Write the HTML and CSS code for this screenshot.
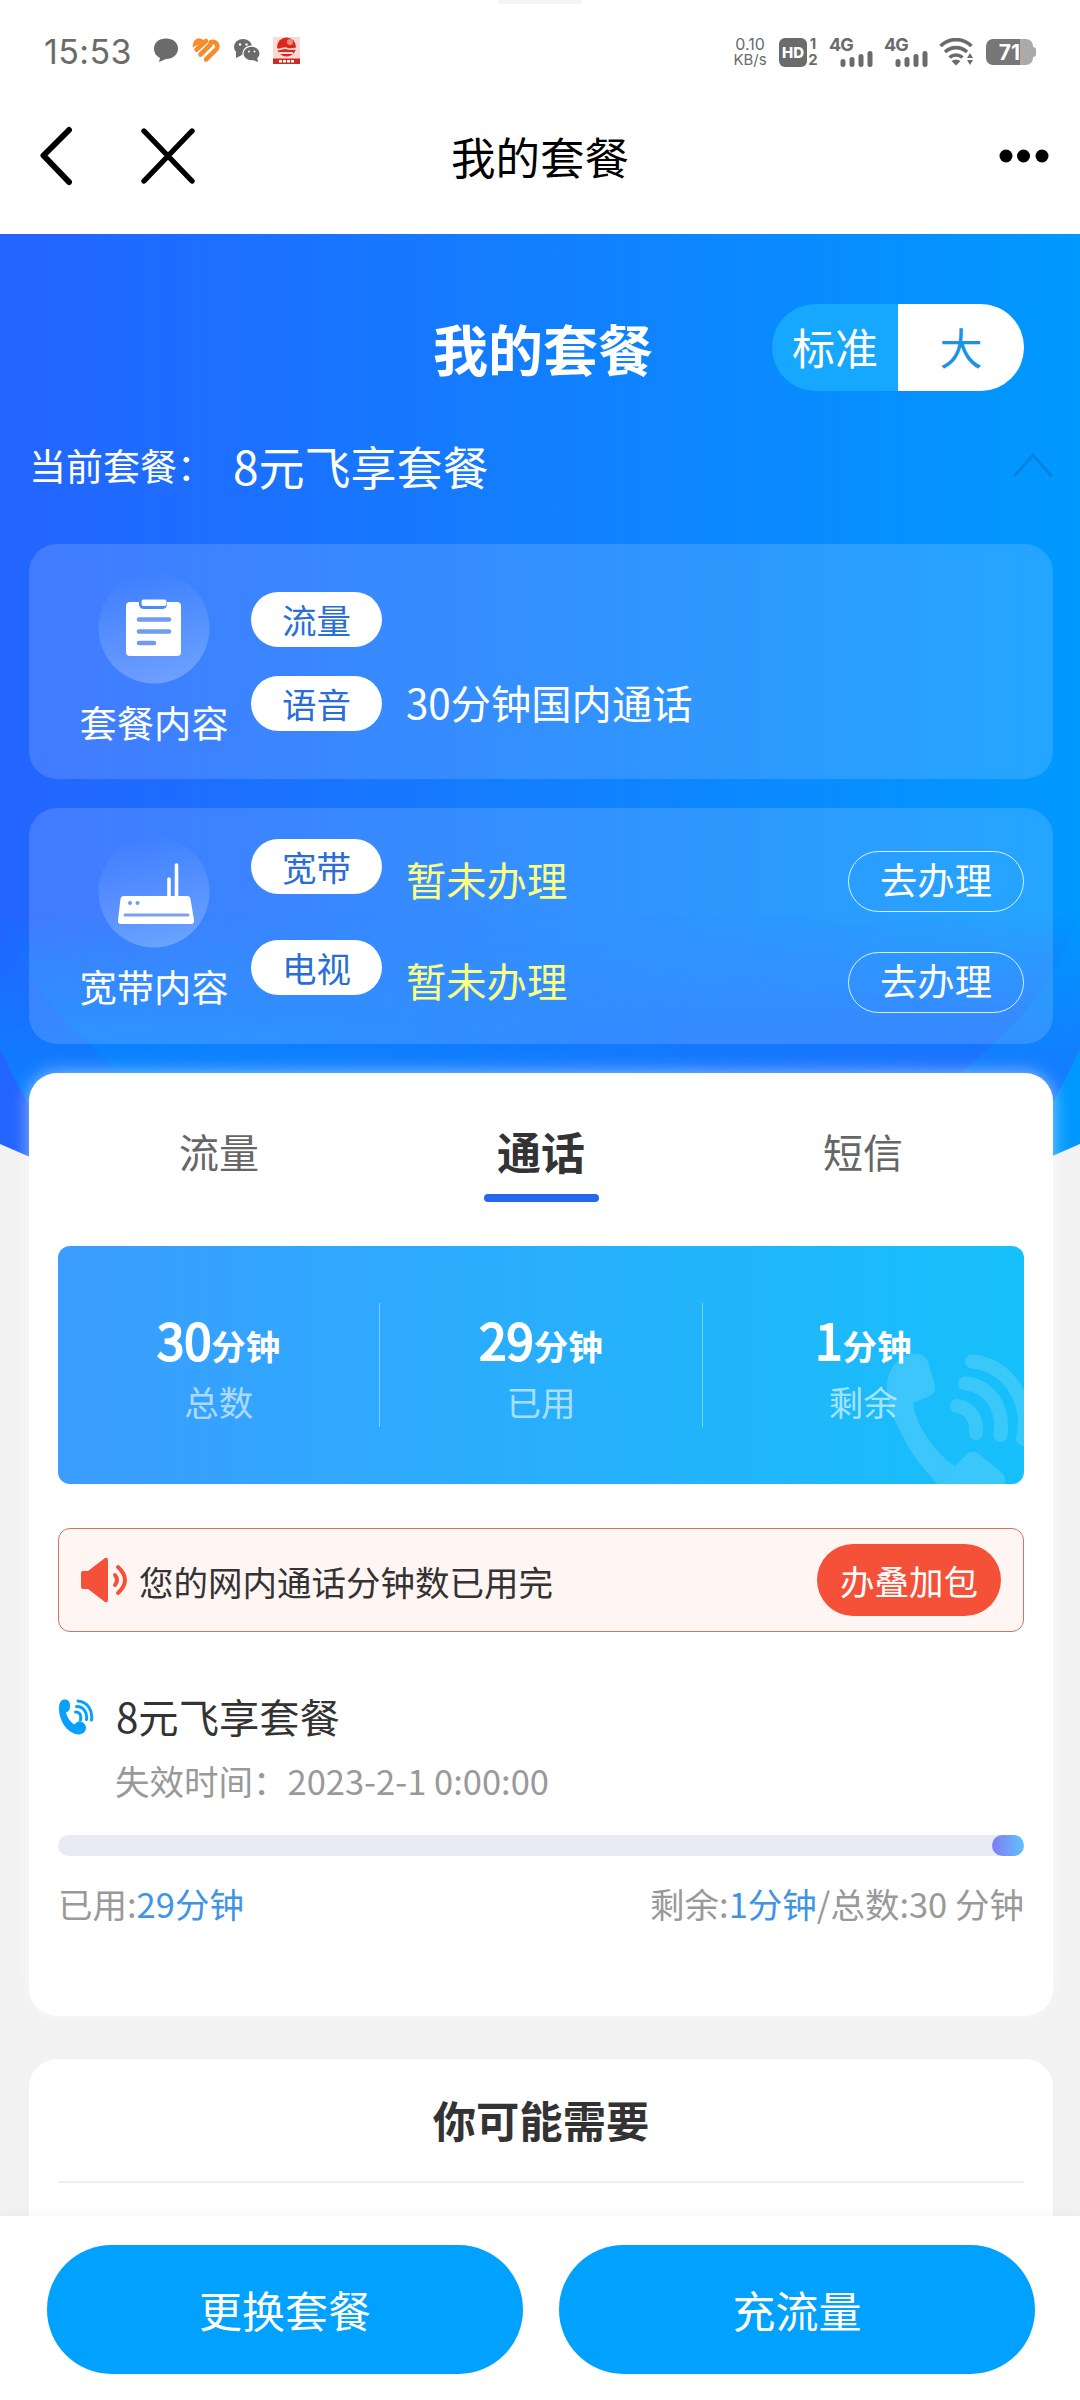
FILE: index.html
```html
<!DOCTYPE html>
<html lang="zh-CN">
<head>
<meta charset="utf-8">
<title>我的套餐</title>
<link rel="stylesheet" href="styles.css">
</head>
<body>
<div class="screen">
  <header class="top">
    <span class="island"></span>
    <div class="status">
      <span class="time">15:53</span>
      <svg class="st-left" width="150" height="30" viewBox="0 0 150 30">
        <path d="M14 2.500c7 0 12 4 12 10s-5 10.500-12 10.500l-7 3 1-4C4 20 2 17 2 12.500c0-6 5-10 12-10z" fill="#6b6b6b"/>
        <g fill="none" stroke="#f58d2c" stroke-width="4.600" stroke-linecap="round">
          <path d="M43.500 7.500a3.500 3.500 0 0 1 5-2.500z"/><path d="M44.500 13.500 54 5"/><path d="M48.500 18.500 58.500 8.500M54 23.500 63 14.500a4.500 4.500 0 0 0-4.500-8"/>
        </g>
        <ellipse cx="91" cy="11" rx="9" ry="8" fill="#6b6b6b"/><path d="M84 16v6l6-3z" fill="#6b6b6b"/>
        <ellipse cx="99.500" cy="17.500" rx="8.600" ry="7.400" fill="#6b6b6b" stroke="#fff" stroke-width="1.200"/><path d="M101 24l5 2-1-5z" fill="#6b6b6b"/>
        <g fill="#fff"><circle cx="88" cy="8.500" r="1.200"/><circle cx="94.500" cy="8.500" r="1.200"/><circle cx="97" cy="15.500" r="1"/><circle cx="102.500" cy="15.500" r="1"/></g>
        <path d="M121 1h27v27h-27z" fill="#fbd9d4"/><circle cx="134.500" cy="11" r="9.500" fill="#d8291c"/>
        <circle cx="138" cy="6" r="3" fill="#f08c78"/>
        <path d="M125 13.500c5 0 7-2.500 10-1s5 .5 9 0M127 17h14" stroke="#fbd9d4" stroke-width="1.800" fill="none"/>
        <path d="M121 22.500h27V28h-27z" fill="#cf2a22"/><path d="M127 25.300h16" stroke="#fff" stroke-width="2.500" stroke-dasharray="3 1"/>
      </svg>
      <span class="grow"></span>
      <span class="speed"><span>0.10</span><span>KB/s</span></span>
      <span class="hd">HD</span>
      <span class="sims"><span>1</span><span>2</span></span>
      <span class="net"><b>4G</b><svg width="33" height="16" viewBox="0 0 33 16"><path d="M3 13.500v-3M12 13.500v-5M21 13.500v-8M30 13.500v-11" stroke="#6b6b6b" stroke-width="5" stroke-linecap="round"/></svg></span>
      <span class="net"><b>4G</b><svg width="33" height="16" viewBox="0 0 33 16"><path d="M3 13.500v-3M12 13.500v-5M21 13.500v-8M30 13.500v-11" stroke="#6b6b6b" stroke-width="5" stroke-linecap="round"/></svg></span>
      <svg class="wifi" width="34" height="28" viewBox="0 0 34 28">
        <g fill="none" stroke="#6b6b6b" stroke-width="3.600"><path d="M1.500 8a22 22 0 0 1 31 0"/><path d="M6 14a16 16 0 0 1 22 0"/><path d="M10.500 19.500a9.500 9.500 0 0 1 13 0"/></g>
        <path d="M12.500 23q4.500-3 9 0L17 27.500z" fill="#6b6b6b"/><path d="M28 20l3-5 3 5zM28 22l3 5 3-5z" fill="#6b6b6b"/>
      </svg>
      <span class="battery"><span>71</span></span>
    </div>
    <div class="nav">
      <svg width="34" height="60" viewBox="0 0 34 60"><path d="M30 4 4.500 29.500 30 56" fill="none" stroke="#000" stroke-width="6" stroke-linecap="round" stroke-linejoin="round"/></svg>
      <svg class="close" width="54" height="56" viewBox="0 0 54 56"><path d="M3 3l48 50M51 3 3 53" stroke="#000" stroke-width="5.400" stroke-linecap="round"/></svg>
      <h1>我的套餐</h1>
      <svg class="more" width="50" height="14" viewBox="0 0 50 14"><circle cx="7" cy="7" r="6.500"/><circle cx="24.500" cy="7" r="6.500"/><circle cx="43" cy="7" r="6.500"/></svg>
    </div>
  </header>

  <main class="page">
    <svg class="hero-bg" width="1080" height="930" viewBox="0 0 1080 930">
      <defs>
        <linearGradient id="hero" x1="0" y1="0" x2="1" y2="0"><stop offset="0" stop-color="#2464ff"/><stop offset="1" stop-color="#0099ff"/></linearGradient>
        <linearGradient id="fold" x1="0" y1="0" x2="1" y2="0"><stop offset="0" stop-color="#0090ff"/><stop offset="1" stop-color="#2464ff"/></linearGradient>
        <linearGradient id="fade" x1="0" y1="0" x2="0" y2="1"><stop offset="0" stop-color="#fff" stop-opacity="0"/><stop offset="1" stop-color="#fff"/></linearGradient>
        <mask id="low"><path d="M0 680h1080v190H0z" fill="url(#fade)"/></mask>
      </defs>
      <path d="M0 0h1080v910Q540 1150 0 910z" fill="url(#hero)"/>
      <path d="M0 680h1080v135Q1064 850 1040 890H40Q16 850 0 815z" fill="url(#fold)" fill-opacity=".65" mask="url(#low)"/>
      <path d="M0 680h1080q-24 68-70 114L950 850H130L60 782Q24 740 0 680z" fill="url(#fold)" fill-opacity=".7" mask="url(#low)"/>
    </svg>

    <div class="hero-head">
      <h2>我的套餐</h2>
      <div class="toggle"><span>标准</span><span class="on">大</span></div>
    </div>
    <div class="current">
      <span class="cur-label">当前套餐：</span><span class="cur-name">8元飞享套餐</span>
      <svg width="40" height="25" viewBox="0 0 40 25"><path d="M1.500 24 20 3l18.500 21" fill="none" stroke="#0a83df" stroke-width="3"/></svg>
    </div>

    <section class="glass">
      <div class="kind">
        <svg width="112" height="112" viewBox="0 0 112 112">
          <defs><linearGradient id="disc" x1=".4" y1="0" x2=".6" y2="1"><stop offset="0" stop-color="#fff" stop-opacity="0"/><stop offset="1" stop-color="#fff" stop-opacity=".25"/></linearGradient></defs>
          <circle cx="56" cy="56" r="55.500" fill="url(#disc)"/>
          <path d="M32 30h9v2q0 5 5 5h18q5 0 5-5v-2h10q4 0 4 4v46q0 4-4 4H32q-4 0-4-4V34q0-4 4-4z" fill="#fff"/>
          <rect x="43.500" y="27.500" width="25" height="6.500" rx="2" fill="#fff"/>
          <path d="M41 47.500h30M41 59.500h30M41 71h15" stroke="#6f9bf2" stroke-width="4.600" stroke-linecap="round"/>
        </svg>
        <span>套餐内容</span>
      </div>
      <div class="lines first">
        <div class="line"><span class="pill">流量</span></div>
        <div class="line"><span class="pill">语音</span><span class="value">30分钟国内通话</span></div>
      </div>
    </section>

    <section class="glass broadband">
      <div class="kind">
        <svg width="112" height="112" viewBox="0 0 112 112">
          <circle cx="56" cy="56" r="55.500" fill="url(#disc)"/>
          <path d="M71 60V43M78.500 60V29" stroke="#fff" stroke-width="3.600" stroke-linecap="round"/>
          <path d="M26 60h63q3 0 3.500 3L96 84q.5 4-3 4H23q-3.500 0-3-4l2.500-21q.5-3 3.500-3z" fill="#fff"/>
          <path d="M27 79h63" stroke="#7d9fee" stroke-width="3" stroke-linecap="round"/><circle cx="32" cy="67" r="2" fill="#6f9bf2"/><circle cx="39.500" cy="67" r="2" fill="#6f9bf2"/>
        </svg>
        <span>宽带内容</span>
      </div>
      <div class="lines second">
        <div class="line"><span class="pill">宽带</span><span class="value none">暂未办理</span><span class="apply">去办理</span></div>
        <div class="line"><span class="pill">电视</span><span class="value none">暂未办理</span><span class="apply">去办理</span></div>
      </div>
    </section>

    <section class="card usage">
      <nav class="tabs"><span>流量</span><span class="active">通话</span><span>短信</span></nav>
      <div class="stats">
        <svg class="stats-phone" width="140" height="134" viewBox="0 0 140 134">
          <path d="M27 4c9-2 15 2 17 8l6 20c2 7 1 11-4 14l-17 7c1 10 7 24 14 34 8 12 17 22 28 29l12-12c4-3 8-3 12 0l22 18c5 5 5 8 2 14H56C40 121 28 104 19 87 9 68 2 52 3 36 4 18 14 7 27 4z" fill="#fff" fill-opacity=".15"/>
          <path d="M73 56c13 2 20 12 19 27M81 33.500c25 2 39 24 35.500 51.500M88 11.500c34 2 60 38 51 77" fill="none" stroke="#fff" stroke-opacity=".15" stroke-width="14" stroke-linecap="round"/>
        </svg>
        <div class="stat"><p><b>30</b>分钟</p><small>总数</small></div>
        <div class="stat"><p><b>29</b>分钟</p><small>已用</small></div>
        <div class="stat"><p><b>1</b>分钟</p><small>剩余</small></div>
      </div>
      <div class="notice">
        <svg width="48" height="46" viewBox="0 0 48 46"><path d="M2 14h5L24 1q3-1 3 2v40q0 3-3 2L7 32H2q-2 0-2-2V16q0-2 2-2z" fill="#f55139"/><path d="M34 18q4 5 0 10M37 10q14 13 0 26" fill="none" stroke="#f55139" stroke-width="4" stroke-linecap="round"/></svg>
        <span class="notice-text">您的网内通话分钟数已用完</span>
        <span class="notice-btn">办叠加包</span>
      </div>
      <div class="plan">
        <svg width="36" height="36" viewBox="0 0 36 36">
          <path d="M6 .5c4-.5 6 2 6 6 0 4-1 6-4 7 1 5 4 9 8 12l4-3c4-1 8 3 8 6 0 5-4 7-8 7C9 34 1 22 1 9 1 4 3 1 6 .5z" fill="#08a0ff"/>
          <path d="M17.500 13c4 0 6 3 5 8M18.500 7.500c7 0 11 6 10 13M20 2c10 1 15 10 13.500 19" fill="none" stroke="#08a0ff" stroke-width="3" stroke-linecap="round"/>
        </svg>
        <span>8元飞享套餐</span>
      </div>
      <div class="expire">失效时间：2023-2-1 0:00:00</div>
      <div class="bar"><span class="bar-fill" style="width:3.33%"></span></div>
      <div class="totals"><span>已用:<em>29分钟</em></span><span>剩余:<em>1分钟</em>/总数:30 分钟</span></div>
    </section>

    <section class="card need"><h3>你可能需要</h3></section>
  </main>

  <footer class="actions"><span>更换套餐</span><span>充流量</span></footer>
</div>
</body>
</html>
```
FILE: styles.css
```css
* { box-sizing: border-box; margin: 0; padding: 0; }
body { font-family: "Noto Sans CJK SC", sans-serif; background: #f2f2f2; }
svg { display: block; flex: none; }
span { white-space: nowrap; }
.screen { width: 1080px; height: 2400px; overflow: hidden; display: flex; flex-direction: column; }
.top { height: 234px; background: #fff; flex: none; position: relative; z-index: 1; }
.island { position: absolute; left: 498px; top: 0; width: 84px; height: 4px; background: #f4f4f4; }
.status { height: 104px; padding: 0 46px 0 44px; display: flex; align-items: center; color: #6b6b6b; font-family: Inter, sans-serif; }
.time { font-size: 34px; line-height: 40px; width: 108px; letter-spacing: .4px; }
.st-left { margin-top: -2px; }
.grow { flex: 1; }
.speed { display: flex; flex-direction: column; align-items: center; font-size: 15px; line-height: 16.500px; width: 34px; margin-right: 12px; }
.speed span:first-child { font-size: 16px; }
.hd { width: 28px; height: 29px; background: #6b6b6b; color: #fff; border-radius: 6px; font-size: 15px; line-height: 29px; font-weight: 800; text-align: center; }
.sims { width: 12px; margin-right: 10px; font-size: 15px; line-height: 16px; font-weight: 700; display: flex; flex-direction: column; align-items: center; }
.net { width: 46px; height: 30px; margin-right: 9px; display: flex; flex-direction: column; }
.net b { font-size: 18px; line-height: 16px; letter-spacing: -1px; font-weight: 700; }
.net svg { align-self: flex-end; margin: -2px 2px 0 0; }
.wifi { margin-right: 13px; }
.battery { width: 47px; height: 26px; border-radius: 7px; background: linear-gradient(90deg, #777 0 34px, #aaa 34px); margin-right: 1px; color: #fff; font-size: 21px; line-height: 27px; font-weight: 700; text-align: center; position: relative; }
.battery::after { content: ""; position: absolute; right: -3px; top: 8px; width: 3px; height: 10px; background: #aaa; border-radius: 0 3px 3px 0; }
.nav { height: 104px; padding: 0 31px 0 39px; display: flex; align-items: center; }
.close { margin-left: 68px; }
.nav h1 { flex: 1; font-size: 44.500px; line-height: 60px; font-weight: 400; text-align: left; padding-left: 256px; }

.page { position: relative; flex: 1; min-height: 0; overflow: hidden; padding: 0 27px 0 29px; }
.hero-bg { position: absolute; left: 0; top: 0; }
.hero-head, .current, .glass, .card { position: relative; }
.hero-head { height: 88px; margin-top: 69px; display: flex; align-items: center; justify-content: flex-end; padding-right: 29px; }
.hero-head h2 { color: #fff; font-size: 55px; line-height: 80px; font-weight: 700; margin-right: 119px; }
.toggle { width: 252px; height: 87px; border-radius: 44px; overflow: hidden; display: flex; background: #16a7fe; color: #fff; font-size: 43px; line-height: 85px; text-align: center; }
.toggle span { flex: 1; }
.toggle .on { background: #fff; color: #1d93e8; }
.current { height: 153px; display: flex; align-items: center; color: #fff; padding-bottom: 6px; }
.cur-label { font-size: 37px; line-height: 60px; width: 204px; }
.cur-name { font-size: 46px; line-height: 60px; flex: 1; }
.glass { height: 235px; border-radius: 28px; background: rgba(255,255,255,.14); display: flex; margin-bottom: 29px; color: #fff; }
.broadband { height: 236px; }
.kind { width: 170px; margin-left: 40px; display: flex; flex-direction: column; align-items: center; padding-top: 28px; font-size: 37.300px; line-height: 50px; }
.kind span { margin-top: 13px; }
.lines { margin-left: 12px; flex: 1; display: flex; flex-direction: column; }
.first { padding-top: 48px; gap: 29px; }
.second { padding-top: 31px; gap: 46px; }
.line { display: flex; height: 55px; }
.pill { width: 131px; height: 55px; border-radius: 28px; background: #fff; color: #2a6dd6; font-size: 34.500px; line-height: 55px; text-align: center; margin-right: 24px; }
.value { font-size: 40.300px; line-height: 52px; flex: 1; }
.none { color: #fbff84; padding-top: 14px; }
.apply { width: 176px; height: 61px; margin: 12px 29px 0 0; border: 1.500px solid #d8f1ff; border-radius: 31px; font-size: 37.300px; line-height: 55px; text-align: center; }

.card { background: #fff; border-radius: 28px; }
.usage { height: 943px; padding: 48px 29px 0; box-shadow: 0 0 18px rgba(255,255,255,.55); }
.tabs { display: flex; height: 81px; font-size: 40px; line-height: 60px; color: #666; text-align: center; }
.tabs span { flex: 1; }
.tabs .active { font-size: 44px; font-weight: 700; color: #333; display: flex; flex-direction: column; align-items: center; }
.tabs .active::after { content: ""; width: 115px; height: 8px; border-radius: 4px; background: #2667f0; margin-top: 13px; }
.stats { height: 238px; margin-top: 44px; border-radius: 12px; background: linear-gradient(90deg, #3b9dff, #16c0fa); position: relative; overflow: hidden; display: flex; align-items: center; color: #fff; }
.stats-phone { position: absolute; right: 0; bottom: 0; }
.stat { flex: 1; height: 124px; text-align: center; }
.stat + .stat { border-left: 1.500px solid rgba(255,255,255,.4); }
.stat p { font-size: 34.500px; font-weight: 700; line-height: 70px; padding-top: 1px; height: 73px; }
.stat b { font-size: 49px; font-weight: 400; -webkit-text-stroke: 2px #fff; }
.stat small { display: block; font-size: 34.500px; line-height: 50px; color: rgba(255,255,255,.62); }
.notice { height: 104px; margin-top: 44px; border: 1.500px solid #cf7563; border-radius: 12px; background: #fff6f4; display: flex; align-items: center; padding: 0 22px; }
.notice-text { flex: 1; font-size: 34.500px; line-height: 50px; color: #333; padding-left: 10px; padding-top: 1px; }
.notice-btn { width: 184px; height: 72px; border-radius: 36px; background: #f55139; color: #fff; font-size: 34.500px; line-height: 73px; text-align: center; }
.plan { margin-top: 55px; height: 60px; display: flex; align-items: center; gap: 22px; font-size: 40.300px; line-height: 58px; color: #333; }
.plan span { padding-bottom: 2px; }
.expire { padding-left: 57px; margin-top: 8px; font-size: 34.500px; line-height: 50px; color: #999; }
.bar { height: 21px; margin-top: 30px; border-radius: 11px; background: #e9eaf3; display: flex; justify-content: flex-end; }
.bar-fill { height: 21px; border-radius: 11px; background: linear-gradient(90deg, #7f7cf8, #62c1fa); }
.totals { display: flex; justify-content: space-between; margin-top: 22px; font-size: 34.500px; line-height: 50px; color: #999; }
.totals em { font-style: normal; color: #4094e6; }
.need { margin-top: 43px; height: 300px; padding: 0 29px; }
.need h3 { height: 124px; border-bottom: 2px solid #eee; font-size: 43.300px; line-height: 120px; text-align: center; color: #333; }
.actions { height: 184px; flex: none; background: #fff; position: relative; box-shadow: 0 0 14px rgba(0,0,0,.06); padding: 29px 45px 0 47px; display: flex; gap: 36px; }
.actions span { flex: 1; height: 129px; border-radius: 65px; background: #00a1ff; color: #fff; font-size: 43px; line-height: 129px; text-align: center; }
```
